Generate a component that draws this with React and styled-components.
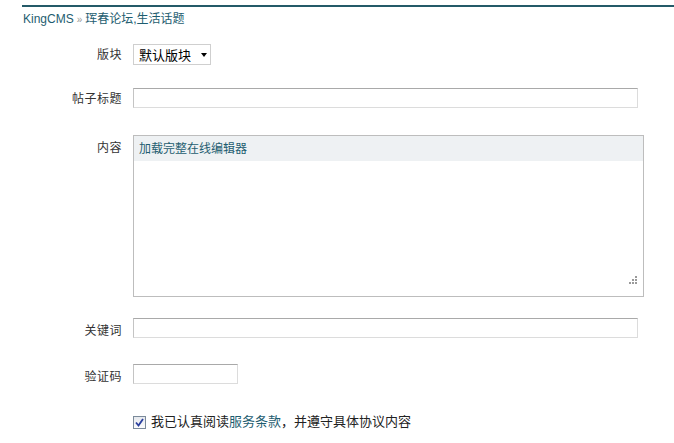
import React from 'react';
import styled, { createGlobalStyle } from 'styled-components';

const GlobalStyle = createGlobalStyle`
  body {
    margin: 0;
    background: #fff;
    font-family: "Liberation Sans", "Noto Sans CJK SC", sans-serif;
    font-size: 12px;
    color: #333;
  }
`;

const Page = styled.div`
  width: 674px;
  height: 443px;
  overflow: hidden;
`;

const TopLine = styled.div`
  margin: 5px 0 0 22px;
  border-top: 2px solid #245a68;
`;

const Crumbs = styled.div`
  margin: 5px 0 0 23px;
  height: 14px;
  line-height: 14px;
  color: #1e5d70;
  font-size: 12px;
`;

const Sep = styled.span`
  color: #999;
  font-size: 10px;
  margin: 0 3px;
`;

const Form = styled.div`
  display: grid;
  grid-template-columns: 122px 1fr;
  column-gap: 11px;
  align-items: start;
`;

const Label = styled.div`
  text-align: right;
  font-size: 12px;
  line-height: 14px;
  height: 14px;
  color: #333;
  margin-top: ${(p) => p.$top}px;
  letter-spacing: 0.5px;
`;

const Field = styled.div`
  margin-top: ${(p) => p.$top}px;
  display: flex;
  align-items: center;
`;

const Select = styled.div`
  width: 71px;
  height: 19px;
  border: 1px solid #cfcfcf;
  display: flex;
  align-items: center;
  padding-left: 5px;
  font-size: 13px;
  color: #000;
`;

const Caret = styled.span`
  margin-left: 10px;
  width: 0;
  height: 0;
  border-left: 3.5px solid transparent;
  border-right: 3.5px solid transparent;
  border-top: 4px solid #000;
`;

const Input = styled.div`
  width: ${(p) => p.$w}px;
  height: 18px;
  border: 1px solid #dcdcdc;
  border-top-color: #a9a9a9;
  border-left-color: #c4c4c4;
  background: #fff;
`;

const Editor = styled.div`
  width: 509px;
  height: 160px;
  border: 1px solid #bdbdbd;
  position: relative;
`;

const EditorBar = styled.div`
  height: 25px;
  background: #eef1f3;
  padding-left: 5px;
  line-height: 26px;
  color: #1e5d70;
  font-size: 12px;
`;

const Grip = styled.svg`
  position: absolute;
  right: 6px;
  bottom: 12px;
`;

const Check = styled.div`
  width: 11px;
  height: 11px;
  border: 1px solid #7b8a9a;
  background: linear-gradient(#e6e9ee, #fbfbfc);
  display: flex;
  align-items: center;
  justify-content: center;
  margin-right: 5px;
`;

const Agree = styled.span`
  font-size: 13px;
  line-height: 16px;
  color: #222;
`;

const Link = styled.span`
  color: #1e5d70;
`;

export default function App() {
  return (
    <Page>
      <GlobalStyle />
      <TopLine />
      <Crumbs>
        KingCMS<Sep>»</Sep>珲春论坛,生活话题
      </Crumbs>
      <Form>
        <Label $top={22}>版块</Label>
        <Field $top={18}>
          <Select>
            默认版块<Caret />
          </Select>
        </Field>

        <Label $top={27}>帖子标题</Label>
        <Field $top={23}>
          <Input $w={503} />
        </Field>

        <Label $top={33}>内容</Label>
        <Field $top={27}>
          <Editor>
            <EditorBar>加载完整在线编辑器</EditorBar>
            <Grip width="8" height="8" viewBox="0 0 8 8">
              <g fill="#9a9a9a">
                <rect x="6" y="0" width="2" height="2" />
                <rect x="3" y="3" width="2" height="2" />
                <rect x="6" y="3" width="2" height="2" />
                <rect x="0" y="6" width="2" height="2" />
                <rect x="3" y="6" width="2" height="2" />
                <rect x="6" y="6" width="2" height="2" />
              </g>
            </Grip>
          </Editor>
        </Field>

        <Label $top={27}>关键词</Label>
        <Field $top={21}>
          <Input $w={503} />
        </Field>

        <Label $top={32}>验证码</Label>
        <Field $top={26}>
          <Input $w={103} />
        </Field>

        <div />
        <Field $top={30}>
          <Check>
            <svg width="9" height="9" viewBox="0 0 9 9">
              <path d="M1 4.5 L3.5 7.5 L8 1" stroke="#2a3f9e" strokeWidth="1.8" fill="none" />
            </svg>
          </Check>
          <Agree>
            我已认真阅读<Link>服务条款</Link>，并遵守具体协议内容
          </Agree>
        </Field>
      </Form>
    </Page>
  );
}
